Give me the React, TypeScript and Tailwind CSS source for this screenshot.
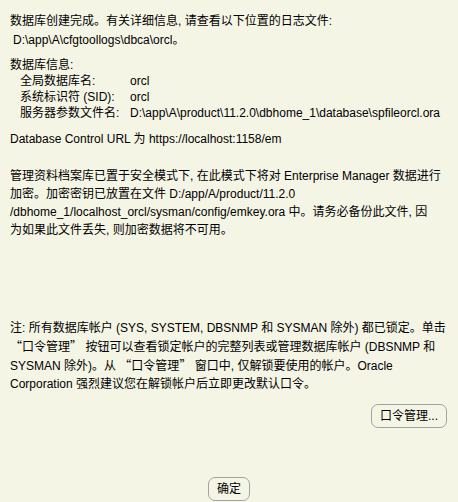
import type { ReactNode } from 'react'

const font = { fontFamily: '"Liberation Sans", "Noto Sans CJK SC", sans-serif' }

function Row({ label, value }: { label: string; value: string }) {
  return (
    <div className="flex whitespace-nowrap">
      <span className="w-[120px] shrink-0 pl-[10px]">{label}</span>
      <span>{value}</span>
    </div>
  )
}

function Lines({ lines, className }: { lines: ReactNode[]; className?: string }) {
  return (
    <div className={className}>
      {lines.map((l, i) => (
        <div key={i} className="whitespace-nowrap">{l}</div>
      ))}
    </div>
  )
}

// full-width quote marks as in the dialog
function Q({ children }: { children: string }) {
  return <span style={{ fontFamily: '"Noto Sans CJK SC", sans-serif' }}>{children}</span>
}

function Btn({ children }: { children: ReactNode }) {
  return (
    <button
      type="button"
      className="h-[24px] px-[8px] rounded-[7px] border border-[#a3a3a0] bg-[#f5f5e6] text-[12px] leading-[22px] text-black"
    >
      {children}
    </button>
  )
}

export default function App() {
  return (
    <div className="w-[458px] h-[502px] overflow-hidden bg-[#f5f5e6] text-black text-[12px]" style={font}>
      <div className="pl-[10px] pt-[12px]">
        <Lines
          className="leading-[19px]"
          lines={[
            '数据库创建完成。有关详细信息, 请查看以下位置的日志文件:',
            <span className="pl-[3px]">D:\app\A\cfgtoollogs\dbca\orcl。</span>,
          ]}
        />

        <div className="mt-[7px] leading-[16px]">
          <div>数据库信息:</div>
          <Row label="全局数据库名:" value="orcl" />
          <Row label="系统标识符 (SID):" value="orcl" />
          <Row label="服务器参数文件名:" value="D:\app\A\product\11.2.0\dbhome_1\database\spfileorcl.ora" />
        </div>

        <div className="mt-[10px] leading-[16px]">Database Control URL 为 https://localhost:1158/em</div>

        <Lines
          className="mt-[20px] leading-[18px]"
          lines={[
            '管理资料档案库已置于安全模式下, 在此模式下将对 Enterprise Manager 数据进行',
            '加密。加密密钥已放置在文件 D:/app/A/product/11.2.0',
            '/dbhome_1/localhost_orcl/sysman/config/emkey.ora 中。请务必备份此文件, 因',
            '为如果此文件丢失, 则加密数据将不可用。',
          ]}
        />

        <Lines
          className="mt-[80px] leading-[18px]"
          lines={[
            '注: 所有数据库帐户 (SYS, SYSTEM, DBSNMP 和 SYSMAN 除外) 都已锁定。单击',
            <>
              <Q>“</Q>口令管理<Q>”</Q> 按钮可以查看锁定帐户的完整列表或管理数据库帐户 (DBSNMP 和
            </>,
            <>
              SYSMAN 除外)。从 <Q>“</Q>口令管理<Q>”</Q> 窗口中, 仅解锁要使用的帐户。Oracle
            </>,
            'Corporation 强烈建议您在解锁帐户后立即更改默认口令。',
          ]}
        />
      </div>

      <div className="mt-[11px] flex justify-end pr-[11px]">
        <Btn>口令管理...</Btn>
      </div>

      <div className="mt-[49px] flex justify-center">
        <Btn>确定</Btn>
      </div>
    </div>
  )
}
